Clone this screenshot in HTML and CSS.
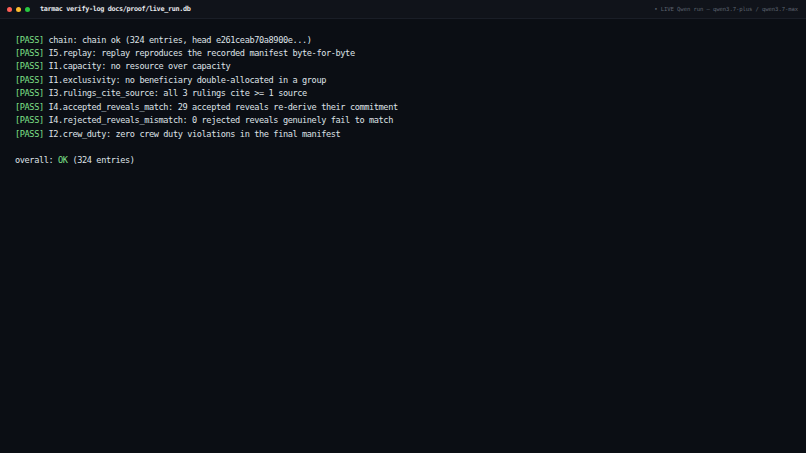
FILE: index.html
```html
<!DOCTYPE html>
<html>
<head>
<meta charset="utf-8">
<link rel="stylesheet" href="styles.css">
</head>
<body>
<div class="window">
  <div class="titlebar">
    <div class="dots">
      <span class="dot red"></span>
      <span class="dot yellow"></span>
      <span class="dot green"></span>
    </div>
    <div class="title">tarmac verify-log docs/proof/live_run.db</div>
    <div class="status">• LIVE Qwen run — qwen3.7-plus / qwen3.7-max</div>
  </div>
  <div class="term">
    <div class="line"><span class="pass">[PASS]</span> chain: chain ok (324 entries, head e261ceab70a8900e...)</div>
    <div class="line"><span class="pass">[PASS]</span> I5.replay: replay reproduces the recorded manifest byte-for-byte</div>
    <div class="line"><span class="pass">[PASS]</span> I1.capacity: no resource over capacity</div>
    <div class="line"><span class="pass">[PASS]</span> I1.exclusivity: no beneficiary double-allocated in a group</div>
    <div class="line"><span class="pass">[PASS]</span> I3.rulings_cite_source: all 3 rulings cite &gt;= 1 source</div>
    <div class="line"><span class="pass">[PASS]</span> I4.accepted_reveals_match: 29 accepted reveals re-derive their commitment</div>
    <div class="line"><span class="pass">[PASS]</span> I4.rejected_reveals_mismatch: 0 rejected reveals genuinely fail to match</div>
    <div class="line"><span class="pass">[PASS]</span> I2.crew_duty: zero crew duty violations in the final manifest</div>
    <div class="line">&nbsp;</div>
    <div class="line">overall: <span class="pass">OK</span> (324 entries)</div>
  </div>
</div>
</body>
</html>
```
FILE: styles.css
```css
html, body {
  margin: 0;
  padding: 0;
  background: #0b0e14;
}
.window {
  width: 806px;
  height: 453px;
  background: #0b0e14;
  display: flex;
  flex-direction: column;
}
.titlebar {
  height: 19px;
  box-sizing: border-box;
  background: #10131a;
  border-bottom: 1px solid #1a1e27;
  display: flex;
  align-items: center;
  padding: 0 8px 0 7px;
}
.dots {
  display: flex;
  gap: 4px;
  margin-right: 10px;
}
.dot {
  width: 5px;
  height: 5px;
  border-radius: 50%;
  display: block;
}
.red { background: #ff5f57; }
.yellow { background: #febc2e; }
.green { background: #28c840; }
.title {
  font-family: "DejaVu Sans Mono", monospace;
  font-weight: bold;
  font-size: 6.8px;
  letter-spacing: -0.33px;
  color: #e6e8ec;
  flex: 1;
}
.status {
  font-family: "DejaVu Sans Mono", monospace;
  font-size: 5.6px;
  letter-spacing: -0.1px;
  color: #5d6370;
}
.term {
  padding: 14.5px 0 0 15px;
  font-family: "DejaVu Sans Mono", monospace;
  font-size: 8.6px;
  letter-spacing: -0.39px;
  line-height: 13.45px;
  color: #dfe2e7;
}
.line {
  white-space: pre;
  height: 13.45px;
}
.pass {
  color: #7ee08a;
}
```
